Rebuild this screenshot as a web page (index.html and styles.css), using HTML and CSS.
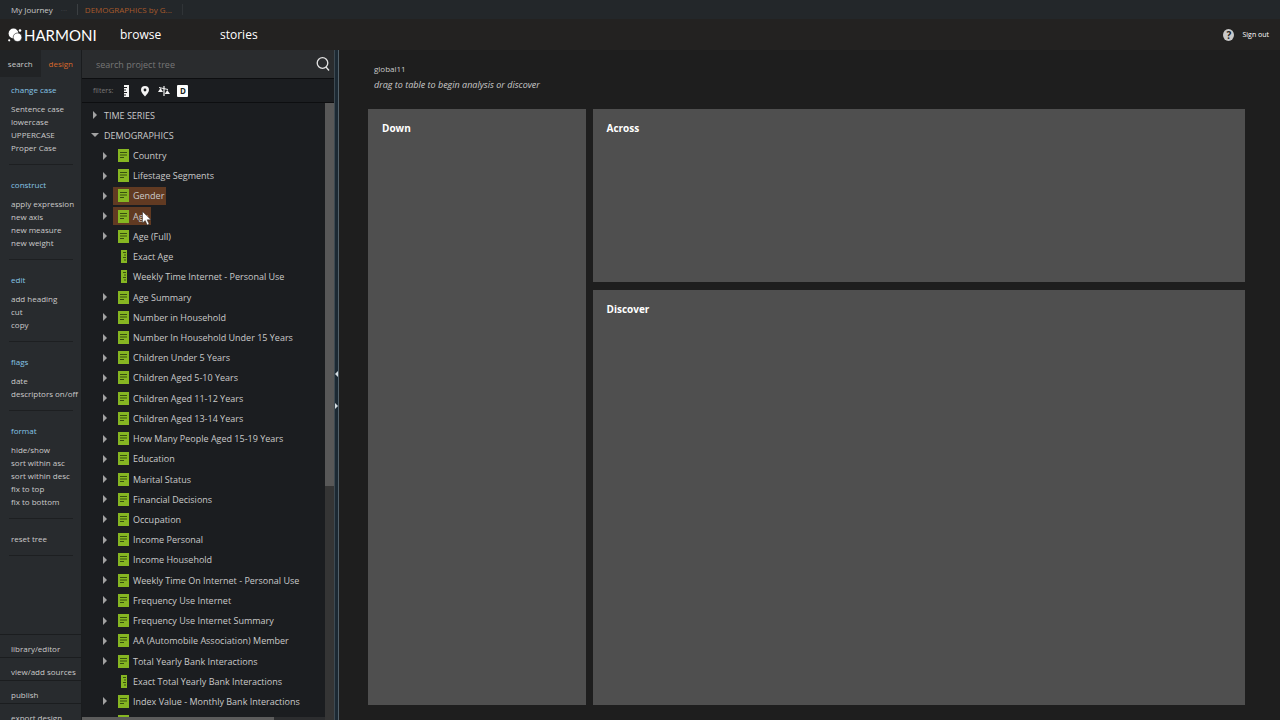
FILE: index.html
```html
<!DOCTYPE html>
<html lang="en">
<head>
    <meta charset="UTF-8">
    <meta name="viewport" content="width=device-width, initial-scale=1.0">
    <title>Harmoni</title>
    <link rel="stylesheet" href="styles.css">
</head>
<body>
    <svg class="sprite" aria-hidden="true">
        <symbol id="axis" viewBox="0 0 11 13">
            <rect width="11" height="13" fill="#86b622"/>
            <path d="M2 3.500h7M2 6h7M2 8.500h4" stroke="#36500f" stroke-width="1"/>
        </symbol>
        <symbol id="measure" viewBox="0 0 11 13">
            <rect x="3" width="6" height="13" fill="#86b622"/>
            <path d="M5 2.500h3M6 5h2M5 7.500h3M6 10h2" stroke="#36500f"/>
        </symbol>
        <symbol id="arrow" viewBox="0 0 4 8">
            <path d="M0 0l4 4-4 4z" fill="#a2a2a2"/>
        </symbol>
        <symbol id="arrow-down" viewBox="0 0 8 4">
            <path d="M0 0h8L4 4z" fill="#a2a2a2"/>
        </symbol>
    </svg>

    <div class="top-tabs">
        <a href="#" class="top-tab">My Journey</a>
        <span class="dots">···</span>
        <a href="#" class="top-tab current">DEMOGRAPHICS by G...</a>
    </div>

    <header class="header">
        <a href="#" class="logo">
            <svg width="14" height="14" viewBox="0 0 14 14" fill="#fff" aria-hidden="true">
                <circle cx="5.500" cy="5.500" r="4.900"/>
                <circle cx="9.500" cy="9.300" r="4.300" stroke="#232221" stroke-width=".6"/>
                <circle cx="12" cy="2.500" r="1.300"/>
                <circle cx="1.200" cy="12.300" r="1.100"/>
            </svg>
            <span>HARMONI</span>
        </a>
        <nav class="nav">
            <a href="#">browse</a>
            <a href="#">stories</a>
        </nav>
        <div class="account">
            <button class="help" aria-label="Help">?</button>
            <a href="#">Sign out</a>
        </div>
    </header>

    <div class="workspace">
        <aside class="sidebar">
            <div class="side-tabs">
                <button>search</button>
                <button class="active">design</button>
            </div>
            <div class="menu">
                <section>
                    <h2>change case</h2>
                    <button>Sentence case</button>
                    <button>lowercase</button>
                    <button>UPPERCASE</button>
                    <button>Proper Case</button>
                </section>
                <section>
                    <h2>construct</h2>
                    <button>apply expression</button>
                    <button>new axis</button>
                    <button>new measure</button>
                    <button>new weight</button>
                </section>
                <section>
                    <h2>edit</h2>
                    <button>add heading</button>
                    <button>cut</button>
                    <button>copy</button>
                </section>
                <section>
                    <h2>flags</h2>
                    <button>date</button>
                    <button>descriptors on/off</button>
                </section>
                <section>
                    <h2>format</h2>
                    <button>hide/show</button>
                    <button>sort within asc</button>
                    <button>sort within desc</button>
                    <button>fix to top</button>
                    <button>fix to bottom</button>
                </section>
                <section>
                    <button>reset tree</button>
                </section>
            </div>
            <div class="side-actions">
                <button>library/editor</button>
                <button>view/add sources</button>
                <button>publish</button>
                <button>export design</button>
            </div>
        </aside>

        <section class="project">
            <div class="search">
                <input type="text" id="treeSearch" placeholder="search project tree" aria-label="search project tree">
                <button aria-label="Search">
                    <svg width="14" height="14" viewBox="0 0 14 14" fill="none" stroke="#e4e4e4" stroke-width="1.300">
                        <circle cx="6.500" cy="6" r="5.300"/>
                        <path d="M10 10l3 3.500"/>
                    </svg>
                </button>
            </div>
            <div class="filters">
                <span>filters:</span>
                <button aria-label="Measures">
                    <svg width="12" height="12" viewBox="0 0 12 12"><rect x="4" width="5" height="12" fill="#f4f4f4"/><path d="M4 2.500h3M4 5h2M4 7.500h3M4 10h2" stroke="#1b1d20"/></svg>
                </button>
                <button aria-label="Locations">
                    <svg width="12" height="12" viewBox="0 0 12 12"><path fill="#f4f4f4" fill-rule="evenodd" d="M6 1a4 4 0 0 1 4 4c0 2.500-2.500 4.500-4 6.500C4.500 9.500 2 7.500 2 5a4 4 0 0 1 4-4zm0 2.600a1.400 1.400 0 1 0 0 2.800 1.400 1.400 0 0 0 0-2.800z"/></svg>
                </button>
                <button aria-label="Weights">
                    <svg width="12" height="12" viewBox="0 0 12 12" fill="#f4f4f4"><path d="M1 2l9 2v1L1 3zM5.400 1h1.200v10H5.400zM2.500 3L5 7H0zM9.200 5L12 9H6.800z"/></svg>
                </button>
                <button aria-label="Date" class="date-filter">D</button>
            </div>
            <div class="tree-area">
                <div class="tree-column">
                    <div class="tree-view">
                        <ul class="tree" id="tree"></ul>
                    </div>
                    <div class="scroll-x"><div></div></div>
                </div>
                <div class="scroll-y"><div></div></div>
            </div>
        </section>

        <div class="splitter">
            <svg width="3" height="6" viewBox="0 0 3 6"><path d="M3 0v6L0 3z" fill="#d5dde2"/></svg>
            <svg width="3" height="6" viewBox="0 0 3 6"><path d="M0 0v6l3-3z" fill="#d5dde2"/></svg>
        </div>

        <main class="main">
            <div class="title">
                <h1>global11</h1>
                <p>drag to table to begin analysis or discover</p>
            </div>
            <div class="drop-zones">
                <section class="zone down"><h2>Down</h2></section>
                <section class="zone"><h2>Across</h2></section>
                <section class="zone"><h2>Discover</h2></section>
            </div>
        </main>
    </div>

    <svg class="cursor" width="10" height="15" viewBox="0 0 10 15" aria-hidden="true">
        <path d="M.5.500v11.500l2.700-2.500 2 4.500 1.900-.9-2-4.300h3.900z" fill="#fff" stroke="#222" stroke-width=".5"/>
    </svg>

    <script src="tree.js"></script>
</body>
</html>
```
FILE: styles.css
```css
* {
    box-sizing: border-box;
}
body {
    margin: 0;
    height: 100vh;
    display: flex;
    flex-direction: column;
    overflow: hidden;
    background: #1e1e1e;
    color: #cacaca;
    font-family: 'Open Sans', sans-serif;
    font-size: 9px;
}
h1, h2, p, ul {
    margin: 0;
    padding: 0;
}
a {
    color: inherit;
    text-decoration: none;
}
button {
    padding: 0;
    border: none;
    background: none;
    color: inherit;
    font: inherit;
    text-align: left;
    white-space: nowrap;
    cursor: pointer;
}
svg {
    display: block;
    flex: none;
}
.sprite {
    position: absolute;
    width: 0;
    height: 0;
}

/* Top bars */
.top-tabs {
    flex: none;
    display: flex;
    height: 19px;
    padding-left: 11px;
    align-items: center;
    background: #23272a;
    font-size: 8px;
}
.dots {
    width: 24px;
    padding-left: 8px;
    color: #43474a;
}
.current {
    padding: 0 10px 0 7px;
    border-left: 1px solid #3b3f42;
    border-right: 1px solid #303437;
    color: #a85a2b;
}
.header {
    flex: none;
    display: flex;
    height: 31px;
    padding: 0 11px 0 8px;
    align-items: center;
    background: #232221;
    color: #fff;
}
.logo {
    display: flex;
    width: 112px;
    gap: 2px;
    align-items: center;
    font-family: 'Lato', sans-serif;
    font-size: 15px;
}
.nav {
    display: flex;
    font-size: 12px;
}
.nav a {
    width: 100px;
}
.account {
    display: flex;
    margin-left: auto;
    gap: 8px;
    align-items: center;
    font-size: 7px;
}
.help {
    width: 11px;
    height: 12px;
    border-radius: 50%;
    background: #c9c9c9;
    color: #222;
    font-size: 10px;
    font-weight: bold;
    line-height: 12px;
    text-align: center;
}

.workspace {
    flex: 1;
    display: flex;
    min-height: 0;
}

/* Design menu */
.sidebar {
    flex: none;
    display: flex;
    flex-direction: column;
    width: 82px;
    border-right: 1px solid #1a1c1e;
    background: #282b2e;
    font-size: 8px;
}
.side-tabs {
    display: flex;
    height: 27px;
}
.side-tabs button {
    width: 50%;
    background: #212325;
    text-align: center;
}
.side-tabs .active {
    background: #282b2e;
    color: #d8692c;
}
.menu {
    flex: 1;
    padding: 6px 8px 0 9px;
}
.menu section {
    margin-bottom: 13px;
    padding: 0 0 10px 2px;
    border-bottom: 1px solid #1d1f21;
}
.menu h2 {
    margin-bottom: 5px;
    color: #86c5e6;
    font-size: 8px;
    font-weight: normal;
    line-height: 14px;
}
.menu button {
    display: block;
    line-height: 13px;
}
.side-actions {
    flex: none;
    height: 86px;
    overflow: hidden;
}
.side-actions button {
    display: block;
    width: 100%;
    height: 23px;
    padding: 4px 0 0 11px;
    border-top: 1px solid #1b1d1f;
}

/* Project tree */
.project {
    flex: none;
    display: flex;
    flex-direction: column;
    width: 252px;
    background: #1b1d20;
}
.search {
    display: flex;
    height: 29px;
    padding: 0 4px 0 14px;
    align-items: center;
    background: #2a2c2e;
    border-bottom: 1px solid #0d0e10;
}
.search input {
    flex: 1;
    padding: 0;
    border: none;
    outline: none;
    background: none;
    color: #ddd;
    font: inherit;
}
.search input::placeholder {
    color: #777;
}
.filters {
    display: flex;
    height: 24px;
    padding-left: 11px;
    gap: 7px;
    align-items: center;
    border-bottom: 1px solid #0d0e10;
    color: #777;
    font-size: 7px;
}
.date-filter {
    width: 11px;
    height: 12px;
    border-radius: 1px;
    background: #fff;
    color: #1b1d20;
    font-size: 8px;
    font-weight: bold;
    line-height: 12px;
    text-align: center;
}
.tree-area {
    flex: 1;
    display: flex;
    min-height: 0;
}
.tree-column {
    flex: 1;
    display: flex;
    flex-direction: column;
    min-width: 0;
}
.tree-view {
    flex: 1;
    min-height: 0;
    padding-top: 2px;
    overflow: hidden;
}
/* last row runs under the scrollbar */
.tree {
    display: flex;
    flex-direction: column;
    height: calc(100% + 15px);
    list-style: none;
}
.tree li {
    flex: 1;
    display: flex;
    min-height: 0;
    padding-left: 19px;
    align-items: center;
    white-space: nowrap;
}
.tree .branch {
    padding-left: 9px;
}
.toggle {
    flex: none;
    width: 8px;
    margin-right: 4px;
}
.toggle svg {
    margin: 0 auto;
}
.branch .toggle {
    margin-right: 0;
}
.tree .label {
    display: flex;
    height: 18px;
    padding: 0 2px 0 5px;
    gap: 4px;
    align-items: center;
}
.tree .selected {
    background: #613a22;
}
.scroll-x {
    height: 3px;
    background: #2c2d2f;
}
.scroll-x div {
    width: 79%;
    height: 100%;
    background: #5c5c5c;
}
.scroll-y {
    width: 9px;
    background: #353535;
}
.scroll-y div {
    height: 62%;
    background: #585858;
}
.splitter {
    flex: none;
    display: flex;
    flex-direction: column;
    width: 5px;
    padding-top: 10px;
    gap: 26px;
    justify-content: center;
    align-items: center;
    border-left: 1px solid #3e4a52;
    border-right: 1px solid #53616a;
    background: #1c2933;
}

/* Analysis area */
.main {
    flex: 1;
    display: flex;
    flex-direction: column;
    padding: 11px 35px 15px 29px;
}
.title {
    height: 48px;
    padding-left: 6px;
    line-height: 16px;
}
.title h1 {
    font-size: 8px;
    font-weight: normal;
}
.title p {
    font-style: italic;
}
.drop-zones {
    flex: 1;
    display: grid;
    grid-template-columns: 1fr 3fr;
    grid-template-rows: 5fr 12fr;
    gap: 8px 7px;
}
.zone {
    padding: 11px 14px;
    background: #4f4f4f;
    color: #fff;
}
.zone h2 {
    font-size: 10px;
    line-height: 16px;
}
.down {
    grid-row: span 2;
}
.cursor {
    position: absolute;
    left: 142px;
    top: 211px;
}
```
FILE: tree.js
```js
const fields = [
    'Country', 'Lifestage Segments', 'Gender', 'Age', 'Age (Full)', 'Exact Age',
    'Weekly Time Internet - Personal Use', 'Age Summary', 'Number in Household',
    'Number In Household Under 15 Years', 'Children Under 5 Years',
    'Children Aged 5-10 Years', 'Children Aged 11-12 Years', 'Children Aged 13-14 Years',
    'How Many People Aged 15-19 Years', 'Education', 'Marital Status',
    'Financial Decisions', 'Occupation', 'Income Personal', 'Income Household',
    'Weekly Time On Internet - Personal Use', 'Frequency Use Internet',
    'Frequency Use Internet Summary', 'AA (Automobile Association) Member',
    'Total Yearly Bank Interactions', 'Exact Total Yearly Bank Interactions',
    'Index Value - Monthly Bank Interactions', ''
];
const measures = ['Exact Age', 'Weekly Time Internet - Personal Use', 'Exact Total Yearly Bank Interactions'];
const selected = ['Gender', 'Age'];

function toggle(icon, width, height, name) {
    return `<button class="toggle" aria-label="Expand ${name}"><svg width="${width}" height="${height}"><use href="#${icon}"/></svg></button>`;
}

let rows = `
    <li class="branch">${toggle('arrow', 4, 8, 'TIME SERIES')}<span class="label">TIME SERIES</span></li>
    <li class="branch">${toggle('arrow-down', 8, 4, 'DEMOGRAPHICS')}<span class="label">DEMOGRAPHICS</span></li>
`;

fields.forEach(name => {
    const isMeasure = measures.includes(name);
    rows += `
        <li>
            ${isMeasure ? '<span class="toggle"></span>' : toggle('arrow', 4, 8, name)}
            <span class="label ${selected.includes(name) ? 'selected' : ''}">
                <svg width="11" height="13"><use href="#${isMeasure ? 'measure' : 'axis'}"/></svg>
                ${name}
            </span>
        </li>
    `;
});

document.getElementById('tree').innerHTML = rows;
```
